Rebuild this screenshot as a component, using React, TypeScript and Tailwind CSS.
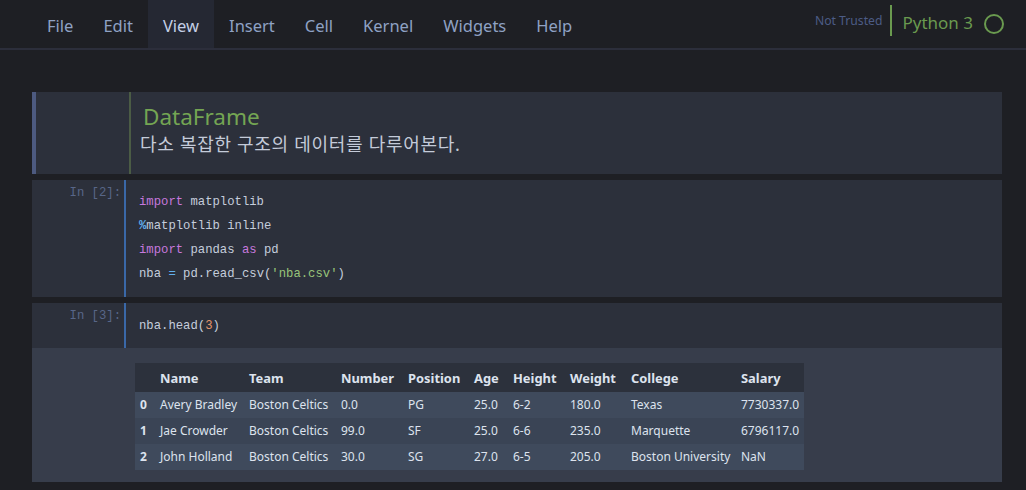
import React from "react";

const ui = { fontFamily: '"Noto Sans", "Noto Sans CJK KR", sans-serif' };
const mono = { fontFamily: '"Liberation Mono", "DejaVu Sans Mono", monospace' };

const menu = ["File", "Edit", "View", "Insert", "Cell", "Kernel", "Widgets", "Help"];

const cols = [
  { h: "", w: 20 },
  { h: "Name", w: 89 },
  { h: "Team", w: 92 },
  { h: "Number", w: 67 },
  { h: "Position", w: 66 },
  { h: "Age", w: 39 },
  { h: "Height", w: 57 },
  { h: "Weight", w: 61 },
  { h: "College", w: 110 },
  { h: "Salary", w: 68 },
];

const rows = [
  ["0", "Avery Bradley", "Boston Celtics", "0.0", "PG", "25.0", "6-2", "180.0", "Texas", "7730337.0"],
  ["1", "Jae Crowder", "Boston Celtics", "99.0", "SF", "25.0", "6-6", "235.0", "Marquette", "6796117.0"],
  ["2", "John Holland", "Boston Celtics", "30.0", "SG", "27.0", "6-5", "205.0", "Boston University", "NaN"],
];

function Kw({ children }: { children: React.ReactNode }) {
  return <span className="text-[#c678dd]">{children}</span>;
}

export default function App() {
  return (
    <div className="w-[1026px] h-[490px] overflow-hidden bg-[#1e1f24]" style={ui}>
      {/* top bar */}
      <div className="h-[50px] border-b-2 border-[#2c2e3b] flex items-start">
        <div className="flex ml-[32px] h-[48px]">
          {menu.map((m) => (
            <div
              key={m}
              className={`px-[15px] h-[48px] flex items-center text-[16.5px] ${
                m === "View" ? "bg-[#252833] text-[#c3cfe6]" : "text-[#8fa2c4]"
              }`}
            >
              <span className="mt-[4px]">{m}</span>
            </div>
          ))}
        </div>
        <div className="ml-auto flex items-center h-[48px] mr-[22px]">
          <span className="text-[12.2px] text-[#4c5c86] mb-[6px]">Not Trusted</span>
          <div className="w-[2px] h-[31px] bg-[#6a9a4f] ml-[8px] mb-[7px]"></div>
          <span className="text-[17px] text-[#6a9a4f] ml-[10px] mb-[3px]">Python 3</span>
          <div className="w-[20px] h-[20px] rounded-full border-2 border-[#6a9a4f] ml-[11px] mb-[1px]"></div>
        </div>
      </div>

      <div className="ml-[32px] w-[970px] pt-[42px] flex flex-col gap-[6px]">
        {/* markdown cell */}
        <div className="h-[82px] bg-[#2c303b] flex border-l-4 border-[#4d5a80]">
          <div className="w-[93px]"></div>
          <div className="w-[2px] bg-[#4b5c45]"></div>
          <div className="pl-[9px] pt-[11px]">
            <div className="text-[22.5px] leading-[28px] text-[#74a553] pl-[3px]">DataFrame</div>
            <div className="text-[18px] leading-[24px] text-[#c4cbd9] mt-[1px] tracking-[0.7px]">
              다소 복잡한 구조의 데이터를 다루어본다.
            </div>
          </div>
        </div>

        {/* code cell 1 */}
        <div className="h-[117px] bg-[#2c303b] flex">
          <div className="w-[92px] pt-[4px] text-right pr-[3px] text-[12.25px] text-[#586688]" style={mono}>
            In [2]:
          </div>
          <div className="w-[2px] bg-[#3a68a8]"></div>
          <div className="pl-[13px] pt-[10px] text-[12.25px] leading-[24px] text-[#c5cddb]" style={mono}>
            <div>
              <Kw>import</Kw> matplotlib
            </div>
            <div>
              <span className="text-[#61afef] font-bold">%</span>matplotlib inline
            </div>
            <div>
              <Kw>import</Kw> pandas <Kw>as</Kw> pd
            </div>
            <div>
              nba <span className="text-[#61afef]">=</span> pd.read_csv(<span className="text-[#98c379]">'nba.csv'</span>)
            </div>
          </div>
        </div>

        {/* code cell 2 */}
        <div className="flex flex-col">
          <div className="h-[45px] bg-[#2c303b] flex">
            <div className="w-[92px] pt-[4px] text-right pr-[3px] text-[12.25px] text-[#586688]" style={mono}>
              In [3]:
            </div>
            <div className="w-[2px] bg-[#3a68a8]"></div>
            <div className="pl-[13px] pt-[11px] text-[12.25px] leading-[24px] text-[#c5cddb]" style={mono}>
              nba.head(<span className="text-[#e5956a]">3</span>)
            </div>
          </div>
          <div className="h-[134px] bg-[#373d4b] pl-[103px] pt-[15px]">
            <table className="border-collapse text-[12px] text-[#dde3ee]" style={{ ...ui, tableLayout: "fixed" }}>
              <colgroup>
                {cols.map((c, i) => (
                  <col key={i} style={{ width: c.w }} />
                ))}
              </colgroup>
              <thead>
                <tr className="bg-[#2c313c] h-[29px]">
                  {cols.map((c, i) => (
                    <th key={i} className="text-left font-bold text-[12.9px] pl-[5px] pr-0 pt-[2px] whitespace-nowrap">
                      {c.h}
                    </th>
                  ))}
                </tr>
              </thead>
              <tbody>
                {rows.map((r, ri) => (
                  <tr key={ri} className={`h-[26px] ${ri % 2 === 0 ? "bg-[#3f4a5c]" : "bg-[#3a4455]"}`}>
                    {r.map((v, ci) => (
                      <td
                        key={ci}
                        className={`pl-[5px] pr-0 whitespace-nowrap ${ci === 0 ? "font-bold" : ""}`}
                      >
                        {v}
                      </td>
                    ))}
                  </tr>
                ))}
              </tbody>
            </table>
          </div>
        </div>
      </div>
    </div>
  );
}
